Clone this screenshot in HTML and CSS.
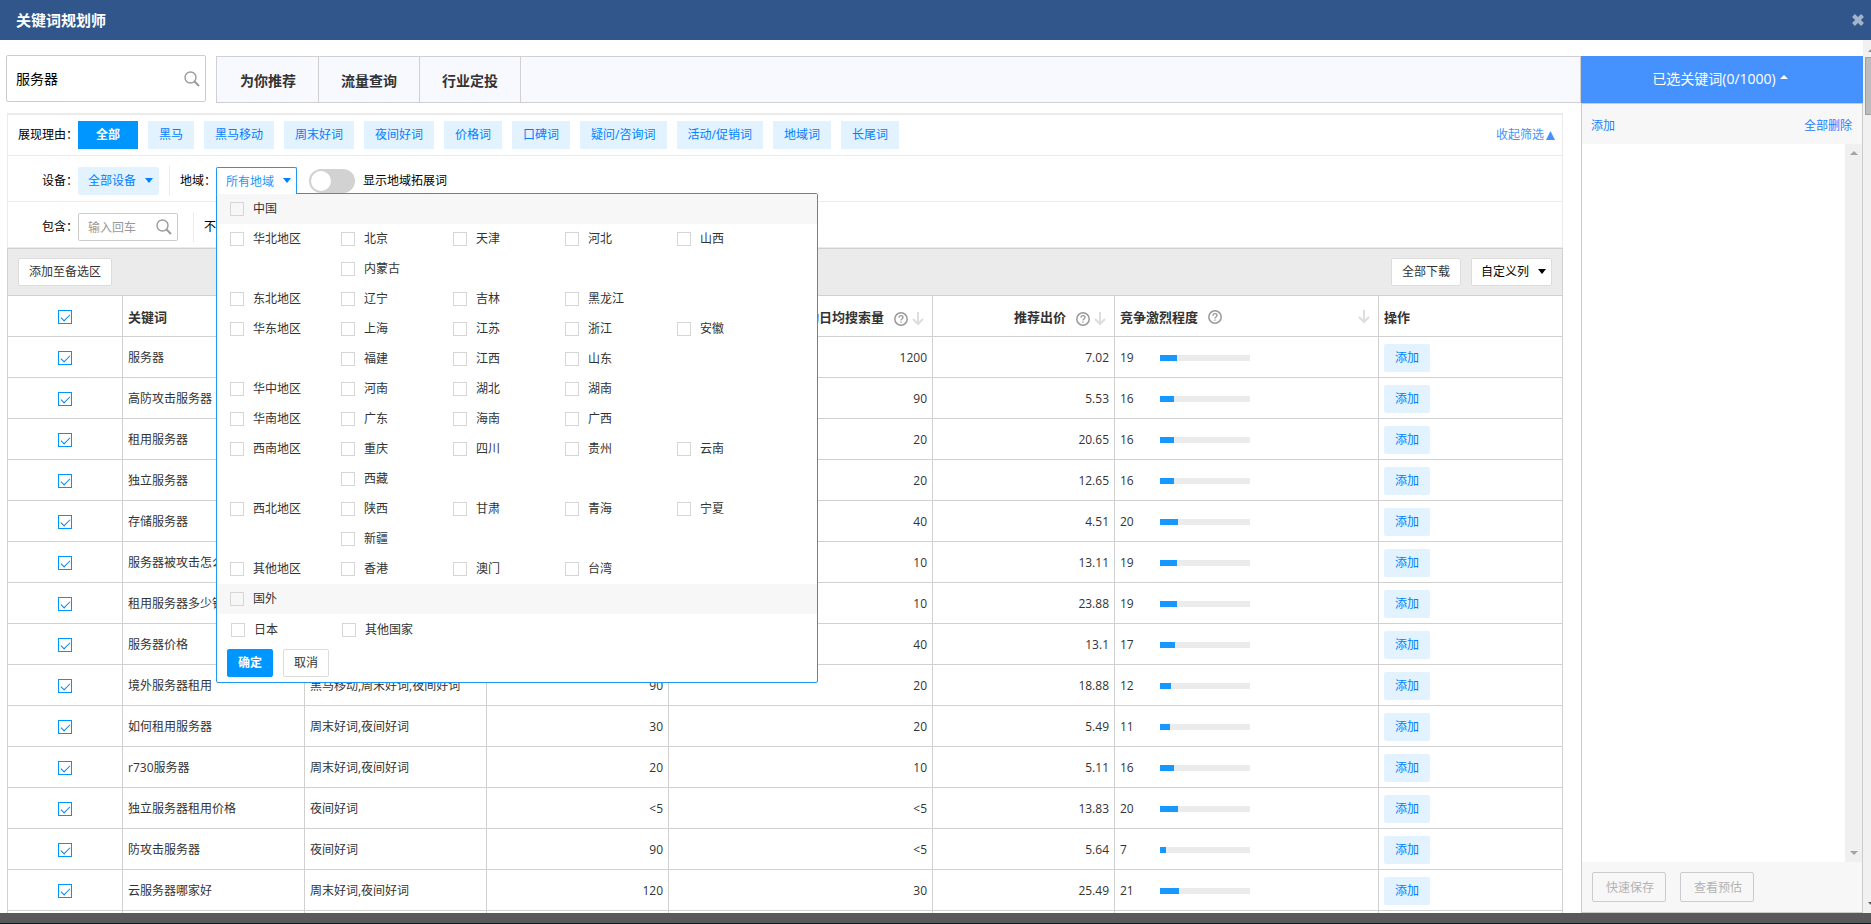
FILE: index.html
```html
<!DOCTYPE html>
<html lang="zh-CN">

<head>
    <meta charset="UTF-8">
    <meta name="viewport" content="width=device-width, initial-scale=1.0">
    <title>关键词规划师</title>
    <link rel="stylesheet" href="styles.css">
</head>

<body>
    <svg class="sprite" aria-hidden="true">
        <symbol id="icon-search" viewBox="0 0 16 16">
            <circle cx="6.5" cy="6.5" r="5.5" fill="none" stroke="currentColor" stroke-width="1.4" />
            <path d="M10.5 10.5 L15 15" stroke="currentColor" stroke-width="2" />
        </symbol>
        <symbol id="icon-help" viewBox="0 0 14 14">
            <circle cx="7" cy="7" r="6.2" fill="none" stroke="currentColor" stroke-width="1.5" />
            <path d="M5 5.7 Q5 3.7 7 3.7 Q9 3.7 9 5.4 Q9 6.4 7.9 7 Q7 7.5 7 8.5 M7 9.5 V10.8" fill="none"
                stroke="currentColor" stroke-width="1.3" />
        </symbol>
        <symbol id="icon-sort" viewBox="0 0 12 14">
            <path d="M6 0 V11 M1 7 L6 12 L11 7" fill="none" stroke="currentColor" stroke-width="2" />
        </symbol>
    </svg>

    <header class="title-bar">
        <h1>关键词规划师</h1>
        <button class="close" type="button" aria-label="关闭">
            <svg viewBox="0 0 12 12" width="12" height="12">
                <path d="M1.5 1.5 L10.5 10.5 M10.5 1.5 L1.5 10.5" stroke="currentColor" stroke-width="4" />
            </svg>
        </button>
    </header>

    <div class="page">
        <main class="main">
            <div class="top-row">
                <div class="search">
                    <input type="text" value="服务器" aria-label="关键词">
                    <svg class="icon-search"><use href="#icon-search" /></svg>
                </div>
                <nav class="tabs">
                    <a href="#">为你推荐</a>
                    <a href="#">流量查询</a>
                    <a href="#">行业定投</a>
                </nav>
            </div>

            <div class="content">
                <section class="filters">
                    <div class="filter-row reasons">
                        <span class="filter-label">展现理由：</span>
                        <button type="button" class="chip active">全部</button>
                        <button type="button" class="chip">黑马</button>
                        <button type="button" class="chip">黑马移动</button>
                        <button type="button" class="chip">周末好词</button>
                        <button type="button" class="chip">夜间好词</button>
                        <button type="button" class="chip">价格词</button>
                        <button type="button" class="chip">口碑词</button>
                        <button type="button" class="chip">疑问/咨询词</button>
                        <button type="button" class="chip">活动/促销词</button>
                        <button type="button" class="chip">地域词</button>
                        <button type="button" class="chip">长尾词</button>
                        <a class="collapse" href="#">收起筛选<svg viewBox="0 0 9 9" width="9" height="9"><path d="M4.5 0 L9 9 H0 Z" fill="currentColor" /></svg></a>
                    </div>

                    <div class="filter-row">
                        <label class="filter-label" for="device">设备：</label>
                        <div class="drop">
                            <select id="device">
                                <option>全部设备</option>
                            </select>
                        </div>
                        <span class="divider"></span>
                        <label for="region">地域：</label>
                        <div class="drop open">
                            <select id="region">
                                <option>所有地域</option>
                            </select>

                            <div class="region-panel">
                                <div class="area head">
                                    <label><input type="checkbox">中国</label>
                                </div>
                                <div class="area">
                                    <label><input type="checkbox">华北地区</label>
                                    <div class="provinces">
                                        <label><input type="checkbox">北京</label>
                                        <label><input type="checkbox">天津</label>
                                        <label><input type="checkbox">河北</label>
                                        <label><input type="checkbox">山西</label>
                                        <label><input type="checkbox">内蒙古</label>
                                    </div>
                                </div>
                                <div class="area">
                                    <label><input type="checkbox">东北地区</label>
                                    <div class="provinces">
                                        <label><input type="checkbox">辽宁</label>
                                        <label><input type="checkbox">吉林</label>
                                        <label><input type="checkbox">黑龙江</label>
                                    </div>
                                </div>
                                <div class="area">
                                    <label><input type="checkbox">华东地区</label>
                                    <div class="provinces">
                                        <label><input type="checkbox">上海</label>
                                        <label><input type="checkbox">江苏</label>
                                        <label><input type="checkbox">浙江</label>
                                        <label><input type="checkbox">安徽</label>
                                        <label><input type="checkbox">福建</label>
                                        <label><input type="checkbox">江西</label>
                                        <label><input type="checkbox">山东</label>
                                    </div>
                                </div>
                                <div class="area">
                                    <label><input type="checkbox">华中地区</label>
                                    <div class="provinces">
                                        <label><input type="checkbox">河南</label>
                                        <label><input type="checkbox">湖北</label>
                                        <label><input type="checkbox">湖南</label>
                                    </div>
                                </div>
                                <div class="area">
                                    <label><input type="checkbox">华南地区</label>
                                    <div class="provinces">
                                        <label><input type="checkbox">广东</label>
                                        <label><input type="checkbox">海南</label>
                                        <label><input type="checkbox">广西</label>
                                    </div>
                                </div>
                                <div class="area">
                                    <label><input type="checkbox">西南地区</label>
                                    <div class="provinces">
                                        <label><input type="checkbox">重庆</label>
                                        <label><input type="checkbox">四川</label>
                                        <label><input type="checkbox">贵州</label>
                                        <label><input type="checkbox">云南</label>
                                        <label><input type="checkbox">西藏</label>
                                    </div>
                                </div>
                                <div class="area">
                                    <label><input type="checkbox">西北地区</label>
                                    <div class="provinces">
                                        <label><input type="checkbox">陕西</label>
                                        <label><input type="checkbox">甘肃</label>
                                        <label><input type="checkbox">青海</label>
                                        <label><input type="checkbox">宁夏</label>
                                        <label><input type="checkbox">新疆</label>
                                    </div>
                                </div>
                                <div class="area">
                                    <label><input type="checkbox">其他地区</label>
                                    <div class="provinces">
                                        <label><input type="checkbox">香港</label>
                                        <label><input type="checkbox">澳门</label>
                                        <label><input type="checkbox">台湾</label>
                                    </div>
                                </div>
                                <div class="area head">
                                    <label><input type="checkbox">国外</label>
                                </div>
                                <div class="area abroad">
                                    <label><input type="checkbox">日本</label>
                                    <label><input type="checkbox">其他国家</label>
                                </div>
                                <div class="panel-actions">
                                    <button type="button" class="btn primary">确定</button>
                                    <button type="button" class="btn">取消</button>
                                </div>
                            </div>
                        </div>
                        <label class="toggle"><input type="checkbox">显示地域拓展词</label>
                    </div>

                    <div class="filter-row">
                        <label class="filter-label" for="include">包含：</label>
                        <div class="search small">
                            <input id="include" type="text" placeholder="输入回车">
                            <svg class="icon-search"><use href="#icon-search" /></svg>
                        </div>
                        <span class="divider"></span>
                        <span>不包含：</span>
                    </div>
                </section>

                <div class="toolbar">
                    <button type="button" class="btn">添加至备选区</button>
                    <button type="button" class="btn download">全部下载</button>
                    <div class="drop columns">
                        <select aria-label="自定义列">
                            <option>自定义列</option>
                        </select>
                    </div>
                </div>

                <table class="keywords">
                    <colgroup>
                        <col class="col-check">
                        <col class="col-word">
                        <col class="col-word">
                        <col class="col-word">
                        <col class="col-wide">
                        <col class="col-word">
                        <col class="col-wide">
                        <col>
                    </colgroup>
                    <thead>
                        <tr>
                            <th class="check"><input type="checkbox" checked aria-label="全选"></th>
                            <th>关键词</th>
                            <th></th>
                            <th></th>
                            <th class="num">移动日均搜索量<svg class="icon-help"><use href="#icon-help" /></svg><svg class="icon-sort"><use href="#icon-sort" /></svg></th>
                            <th class="num">推荐出价<svg class="icon-help"><use href="#icon-help" /></svg><svg class="icon-sort"><use href="#icon-sort" /></svg></th>
                            <th>
                                <div class="th-flex">竞争激烈程度<svg class="icon-help"><use href="#icon-help" /></svg><svg class="icon-sort"><use href="#icon-sort" /></svg></div>
                            </th>
                            <th>操作</th>
                        </tr>
                    </thead>
                    <tbody>
                        <tr>
                            <td class="check"><input type="checkbox" checked aria-label="服务器"></td>
                            <td>服务器</td>
                            <td></td>
                            <td class="num"></td>
                            <td class="num">1200</td>
                            <td class="num">7.02</td>
                            <td><div class="level"><span>19</span><div class="bar"><i style="width: 19%"></i></div></div></td>
                            <td><button type="button" class="add">添加</button></td>
                        </tr>
                        <tr>
                            <td class="check"><input type="checkbox" checked aria-label="高防攻击服务器"></td>
                            <td>高防攻击服务器</td>
                            <td></td>
                            <td class="num"></td>
                            <td class="num">90</td>
                            <td class="num">5.53</td>
                            <td><div class="level"><span>16</span><div class="bar"><i style="width: 16%"></i></div></div></td>
                            <td><button type="button" class="add">添加</button></td>
                        </tr>
                        <tr>
                            <td class="check"><input type="checkbox" checked aria-label="租用服务器"></td>
                            <td>租用服务器</td>
                            <td></td>
                            <td class="num"></td>
                            <td class="num">20</td>
                            <td class="num">20.65</td>
                            <td><div class="level"><span>16</span><div class="bar"><i style="width: 16%"></i></div></div></td>
                            <td><button type="button" class="add">添加</button></td>
                        </tr>
                        <tr>
                            <td class="check"><input type="checkbox" checked aria-label="独立服务器"></td>
                            <td>独立服务器</td>
                            <td></td>
                            <td class="num"></td>
                            <td class="num">20</td>
                            <td class="num">12.65</td>
                            <td><div class="level"><span>16</span><div class="bar"><i style="width: 16%"></i></div></div></td>
                            <td><button type="button" class="add">添加</button></td>
                        </tr>
                        <tr>
                            <td class="check"><input type="checkbox" checked aria-label="存储服务器"></td>
                            <td>存储服务器</td>
                            <td></td>
                            <td class="num"></td>
                            <td class="num">40</td>
                            <td class="num">4.51</td>
                            <td><div class="level"><span>20</span><div class="bar"><i style="width: 20%"></i></div></div></td>
                            <td><button type="button" class="add">添加</button></td>
                        </tr>
                        <tr>
                            <td class="check"><input type="checkbox" checked aria-label="服务器被攻击怎么办"></td>
                            <td>服务器被攻击怎么办</td>
                            <td></td>
                            <td class="num"></td>
                            <td class="num">10</td>
                            <td class="num">13.11</td>
                            <td><div class="level"><span>19</span><div class="bar"><i style="width: 19%"></i></div></div></td>
                            <td><button type="button" class="add">添加</button></td>
                        </tr>
                        <tr>
                            <td class="check"><input type="checkbox" checked aria-label="租用服务器多少钱"></td>
                            <td>租用服务器多少钱</td>
                            <td></td>
                            <td class="num"></td>
                            <td class="num">10</td>
                            <td class="num">23.88</td>
                            <td><div class="level"><span>19</span><div class="bar"><i style="width: 19%"></i></div></div></td>
                            <td><button type="button" class="add">添加</button></td>
                        </tr>
                        <tr>
                            <td class="check"><input type="checkbox" checked aria-label="服务器价格"></td>
                            <td>服务器价格</td>
                            <td></td>
                            <td class="num"></td>
                            <td class="num">40</td>
                            <td class="num">13.1</td>
                            <td><div class="level"><span>17</span><div class="bar"><i style="width: 17%"></i></div></div></td>
                            <td><button type="button" class="add">添加</button></td>
                        </tr>
                        <tr>
                            <td class="check"><input type="checkbox" checked aria-label="境外服务器租用"></td>
                            <td>境外服务器租用</td>
                            <td>黑马移动,周末好词,夜间好词</td>
                            <td class="num">90</td>
                            <td class="num">20</td>
                            <td class="num">18.88</td>
                            <td><div class="level"><span>12</span><div class="bar"><i style="width: 12%"></i></div></div></td>
                            <td><button type="button" class="add">添加</button></td>
                        </tr>
                        <tr>
                            <td class="check"><input type="checkbox" checked aria-label="如何租用服务器"></td>
                            <td>如何租用服务器</td>
                            <td>周末好词,夜间好词</td>
                            <td class="num">30</td>
                            <td class="num">20</td>
                            <td class="num">5.49</td>
                            <td><div class="level"><span>11</span><div class="bar"><i style="width: 11%"></i></div></div></td>
                            <td><button type="button" class="add">添加</button></td>
                        </tr>
                        <tr>
                            <td class="check"><input type="checkbox" checked aria-label="r730服务器"></td>
                            <td>r730服务器</td>
                            <td>周末好词,夜间好词</td>
                            <td class="num">20</td>
                            <td class="num">10</td>
                            <td class="num">5.11</td>
                            <td><div class="level"><span>16</span><div class="bar"><i style="width: 16%"></i></div></div></td>
                            <td><button type="button" class="add">添加</button></td>
                        </tr>
                        <tr>
                            <td class="check"><input type="checkbox" checked aria-label="独立服务器租用价格"></td>
                            <td>独立服务器租用价格</td>
                            <td>夜间好词</td>
                            <td class="num">&lt;5</td>
                            <td class="num">&lt;5</td>
                            <td class="num">13.83</td>
                            <td><div class="level"><span>20</span><div class="bar"><i style="width: 20%"></i></div></div></td>
                            <td><button type="button" class="add">添加</button></td>
                        </tr>
                        <tr>
                            <td class="check"><input type="checkbox" checked aria-label="防攻击服务器"></td>
                            <td>防攻击服务器</td>
                            <td>夜间好词</td>
                            <td class="num">90</td>
                            <td class="num">&lt;5</td>
                            <td class="num">5.64</td>
                            <td><div class="level"><span>7</span><div class="bar"><i style="width: 7%"></i></div></div></td>
                            <td><button type="button" class="add">添加</button></td>
                        </tr>
                        <tr>
                            <td class="check"><input type="checkbox" checked aria-label="云服务器哪家好"></td>
                            <td>云服务器哪家好</td>
                            <td>周末好词,夜间好词</td>
                            <td class="num">120</td>
                            <td class="num">30</td>
                            <td class="num">25.49</td>
                            <td><div class="level"><span>21</span><div class="bar"><i style="width: 21%"></i></div></div></td>
                            <td><button type="button" class="add">添加</button></td>
                        </tr>
                        <tr>
                            <td></td>
                            <td></td>
                            <td></td>
                            <td></td>
                            <td></td>
                            <td></td>
                            <td></td>
                            <td></td>
                        </tr>
                    </tbody>
                </table>
            </div>
        </main>

        <aside class="selected">
            <button type="button" class="selected-head">已选关键词(0/1000)<svg viewBox="0 0 8 4" width="8" height="4"><path d="M4 0 L8 4 H0 Z" fill="currentColor" /></svg></button>
            <div class="selected-body">
                <div class="selected-links">
                    <a href="#">添加</a>
                    <a href="#">全部删除</a>
                </div>
                <div class="selected-list">
                    <div class="scroll">
                        <svg viewBox="0 0 8 4" width="8" height="4"><path d="M4 0 L8 4 H0 Z" fill="currentColor" /></svg>
                        <svg viewBox="0 0 8 4" width="8" height="4"><path d="M0 0 H8 L4 4 Z" fill="currentColor" /></svg>
                    </div>
                </div>
                <div class="selected-foot">
                    <button type="button" disabled>快速保存</button>
                    <button type="button" disabled>查看预估</button>
                </div>
            </div>
        </aside>

        <div class="page-scroll">
            <svg viewBox="0 0 8 4" width="8" height="4"><path d="M4 0 L8 4 H0 Z" fill="#8b8b8b" /></svg>
            <div class="thumb"></div>
            <svg viewBox="0 0 8 4" width="8" height="4"><path d="M0 0 H8 L4 4 Z" fill="#505050" /></svg>
        </div>
    </div>

    <footer class="bottom"></footer>
</body>

</html>
```
FILE: styles.css
```css
* {
    box-sizing: border-box;
}

html,
body {
    margin: 0;
    height: 100%;
    overflow: hidden;
}

body {
    display: flex;
    flex-direction: column;
    font: 12px/18px "Open Sans", "Noto Sans CJK SC", sans-serif;
    color: #000;
    background-color: #fff;
}

button,
input,
select {
    font: inherit;
    color: inherit;
    margin: 0;
}

button {
    padding: 0;
    border: none;
    cursor: pointer;
}

a {
    text-decoration: none;
}

.sprite {
    display: none;
}

/* title bar */
.title-bar {
    display: flex;
    flex: none;
    align-items: center;
    justify-content: space-between;
    height: 40px;
    padding: 0 7px 0 16px;
    background-color: #31568b;
    color: #fff;
}

.title-bar h1 {
    margin: 0;
    font-size: 15px;
}

.close {
    display: flex;
    background: none;
    color: #a3b3cc;
}

.page {
    display: flex;
    flex: 1;
    min-height: 0;
}

.main {
    flex: 1;
    min-width: 0;
    padding: 15px 0 0 6px;
    overflow: hidden;
}

.content {
    margin: 0 18px 0 1px;
}

.top-row {
    display: flex;
    gap: 10px;
    height: 58px;
}

/* search boxes */
.search {
    position: relative;
    width: 200px;
    height: 47px;
}

.search input {
    width: 100%;
    height: 100%;
    padding: 0 40px 2px 9px;
    border: 1px solid #ccc;
    border-radius: 2px;
    font-size: 14px;
    outline: none;
}

.icon-search {
    position: absolute;
    top: 50%;
    right: 6px;
    width: 16px;
    height: 16px;
    margin-top: -8px;
    color: #9b9b9b;
}

.search.small {
    width: 100px;
    height: 28px;
}

.search.small input {
    padding: 0 30px 0 9px;
    font-size: 12px;
}

.search.small input::placeholder {
    color: #999;
}

/* tabs */
.tabs {
    display: flex;
    flex: 1;
    height: 47px;
    margin-top: 1px;
    padding-left: 1px;
    border: 1px solid #d0d0d0;
    background-color: #f8f9ff;
}

.tabs a {
    width: 101px;
    border-right: 1px solid #d0d0d0;
    font-size: 14px;
    font-weight: bold;
    line-height: 47px;
    text-align: center;
    color: #333;
}

/* filters */
.filters {
    border: 1px solid #ebebeb;
    border-top-width: 2px;
    border-bottom: none;
}

.filter-row {
    display: flex;
    align-items: center;
    height: 46px;
    padding-top: 5px;
    border-bottom: 1px solid #ebebeb;
}

.filter-row.reasons {
    gap: 10px;
    height: 41px;
    padding-top: 0;
}

.filter-label {
    width: 70px;
    text-align: right;
}

.reasons .filter-label {
    margin-right: -10px;
}

.chip {
    height: 28px;
    padding: 0 11px;
    background-color: #e2f2ff;
    color: #0080ff;
}

.chip.active {
    padding: 0 18px;
    background-color: #0096ff;
    color: #fff;
    font-weight: bold;
}

.collapse {
    display: flex;
    align-items: center;
    gap: 2px;
    margin-left: auto;
    padding-right: 7px;
    color: #4592ff;
}

.divider {
    width: 1px;
    height: 30px;
    margin: 0 10px;
    background-color: #ebebeb;
}

.search.small + .divider {
    margin: 0 10px 0 15px;
}

/* drop-downs */
.drop {
    position: relative;
    width: 81px;
    height: 28px;
}

.drop select {
    width: 100%;
    height: 100%;
    padding: 0 0 0 10px;
    appearance: none;
    border: none;
    border-radius: 2px;
    background-color: #e2f2ff;
    color: #0080ff;
    outline: none;
}

.drop::after {
    content: "";
    position: absolute;
    top: 11px;
    right: 6px;
    z-index: 3;
    border: 4px solid transparent;
    border-top: 5px solid #0080ff;
    border-bottom: none;
}

.drop.open select {
    position: relative;
    z-index: 2;
    padding-left: 9px;
    border: 1px solid #1e96f5;
    border-bottom: none;
    border-radius: 2px 2px 0 0;
    background-color: #fff;
    clip-path: inset(0 0 1px 0);
    color: #1e96f5;
}

/* region panel */
.region-panel {
    position: absolute;
    top: 26px;
    left: 0;
    z-index: 1;
    width: 602px;
    padding-bottom: 5px;
    border: 1px solid #1e96f5;
    border-radius: 2px;
    background-color: #fff;
    color: #333;
}

.area {
    display: flex;
    min-height: 30px;
    padding-left: 13px;
}

.area.head {
    background-color: #f7f7f7;
}

.area label {
    display: flex;
    flex: none;
    align-items: center;
    gap: 9px;
    width: 112px;
    height: 30px;
}

.area > label {
    width: 111px;
}

.provinces {
    display: flex;
    flex: 1;
    flex-wrap: wrap;
}

.abroad {
    padding: 1px 0 0 14px;
}

.panel-actions {
    display: flex;
    gap: 10px;
    padding: 4px 0 0 10px;
}

input[type="checkbox"] {
    width: 14px;
    height: 14px;
    appearance: none;
    border: 1px solid #d6d6d6;
    vertical-align: middle;
}

.check input {
    display: block;
    margin: 0 auto;
}

.check input:checked {
    border-color: #0096ff;
}

.check input:checked::before {
    content: "";
    display: block;
    width: 8px;
    height: 4px;
    margin: 3px 2px;
    border: 1px solid #0080ff;
    border-width: 0 0 1px 1px;
    transform: rotate(-45deg);
}

/* switch */
.toggle {
    display: flex;
    align-items: center;
    gap: 8px;
    margin-left: 12px;
}

.toggle input[type="checkbox"] {
    width: 46px;
    height: 24px;
    padding: 2px;
    border: none;
    border-radius: 12px;
    background-color: #d2d2d2;
}

.toggle input::before {
    content: "";
    display: block;
    width: 20px;
    height: 20px;
    border-radius: 50%;
    background-color: #fff;
}

.btn {
    height: 28px;
    padding: 0 10px;
    border: 1px solid #dcdcdc;
    border-radius: 2px;
    background-color: #fff;
    color: #333;
}

.btn.primary {
    border-color: #0096ff;
    background-color: #0096ff;
    color: #fff;
    font-weight: bold;
}

/* toolbar */
.toolbar {
    display: flex;
    align-items: center;
    gap: 10px;
    height: 48px;
    padding: 0 10px;
    border: 1px solid #d0d0d0;
    background-color: #ebebeb;
}

.toolbar .download {
    margin-left: auto;
}

.drop.columns select {
    padding-left: 9px;
    border: 1px solid #dcdcdc;
    background-color: #fff;
    color: #000;
}

.drop.columns::after {
    border-top-color: #000;
}

/* keyword table */
.keywords {
    width: 100%;
    table-layout: fixed;
    border-spacing: 0;
    border-left: 1px solid #d0d0d0;
    color: #333;
}

.col-check {
    width: 115px;
}

.col-word {
    width: 182px;
}

.col-wide {
    width: 264px;
}

.keywords th,
.keywords td {
    height: 41px;
    padding: 2px 5px 0;
    border-right: 1px solid #d0d0d0;
    border-bottom: 1px solid #d0d0d0;
    text-align: left;
    white-space: nowrap;
    overflow: hidden;
}

.keywords th {
    font-size: 13px;
}

.keywords .num {
    text-align: right;
}

.keywords th.num {
    padding-right: 8px;
}

.icon-help {
    width: 14px;
    height: 14px;
    margin-left: 10px;
    vertical-align: middle;
    color: #999;
}

.icon-sort {
    width: 12px;
    height: 14px;
    margin-left: 4px;
    vertical-align: middle;
    color: #ddd;
}

.th-flex {
    display: flex;
    align-items: center;
    padding-right: 3px;
}

.th-flex .icon-sort {
    margin-left: auto;
}

.level {
    display: flex;
    align-items: center;
}

.level span {
    width: 40px;
}

.bar {
    width: 90px;
    height: 6px;
    background-color: #ebebeb;
}

.bar i {
    display: block;
    height: 100%;
    background-color: #1698ff;
}

.add {
    display: block;
    width: 46px;
    height: 28px;
    border-radius: 2px;
    background-color: #e2f2ff;
    color: #0080ff;
}

/* selected keywords */
.selected {
    display: flex;
    flex: none;
    flex-direction: column;
    width: 282px;
    padding-top: 16px;
}

.selected-head {
    display: flex;
    flex: none;
    align-items: center;
    justify-content: center;
    gap: 4px;
    height: 47px;
    padding: 0 4px 2px 0;
    background-color: #4592ff;
    color: #fff;
    font-size: 14px;
}

.selected-head svg {
    margin-bottom: 4px;
}

.selected-body {
    display: flex;
    flex: 1;
    flex-direction: column;
    border: 1px solid #ccc;
}

.selected-links {
    display: flex;
    align-items: center;
    justify-content: space-between;
    height: 40px;
    padding: 4px 10px 0 9px;
    background-color: #f7f7f7;
}

.selected-links a {
    color: #1e80ff;
}

.selected-list {
    display: flex;
    flex: 1;
    justify-content: flex-end;
}

.scroll {
    display: flex;
    flex-direction: column;
    align-items: center;
    justify-content: space-between;
    width: 17px;
    padding: 7px 0;
    background-color: #f0f0f0;
    color: #a3a3a3;
}

.selected-foot {
    display: flex;
    gap: 14px;
    height: 50px;
    padding: 10px;
    background-color: #f7f7f7;
}

.selected-foot button {
    width: 74px;
    height: 30px;
    padding: 2px 0 0 2px;
    border: 1px solid #ccc;
    border-radius: 2px;
    background-color: #f7f7f7;
    color: #b3b3b3;
}

/* page scrollbar, cut off by the window edge */
.page-scroll {
    display: flex;
    flex: none;
    flex-direction: column;
    width: 8px;
    padding: 8px 0 7px 5px;
    background-color: #f1f1f1;
    overflow: hidden;
}

.page-scroll svg {
    flex: none;
}

.page-scroll .thumb {
    width: 13px;
    height: 58px;
    margin: 5px 0 auto -3px;
    border: 1px solid #a0a0a0;
    background-color: #bcbcbc;
}

.bottom {
    flex: none;
    height: 11px;
    border-bottom: 1px solid #0b1a2b;
    background-color: #595959;
}
```
